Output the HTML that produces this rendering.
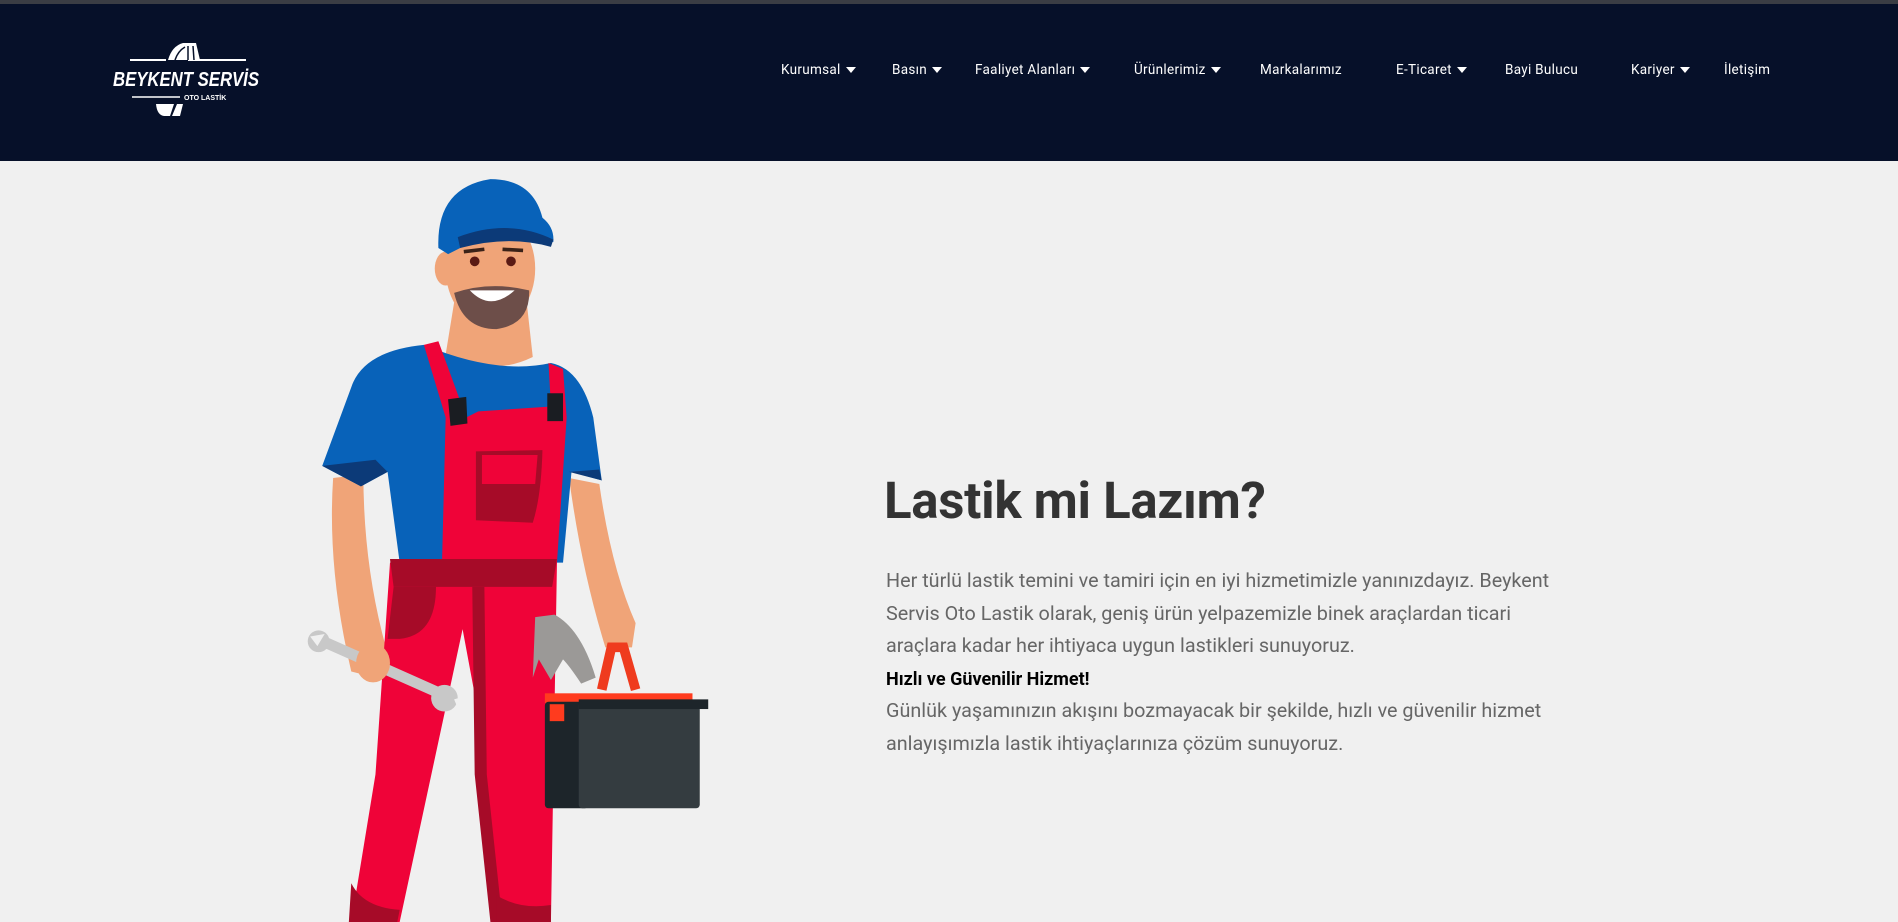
<!DOCTYPE html>
<html><head><meta charset="utf-8"><style>
*{margin:0;padding:0;box-sizing:border-box}
body{width:1898px;height:922px;overflow:hidden;background:#f0f0f0;font-family:"Roboto","Liberation Sans",sans-serif;position:relative}
.top{position:absolute;left:0;top:0;width:1898px;height:4px;background:#3a3d44}
header{position:absolute;left:0;top:4px;width:1898px;height:157px;background:#061029}
nav a{position:absolute;top:58px;color:#fff;font-size:13.5px;letter-spacing:.3px;text-decoration:none;white-space:nowrap}
nav a .c{display:inline-block;margin-left:5px;width:0;height:0;border-left:5px solid transparent;border-right:5px solid transparent;border-top:6px solid #fff;vertical-align:1px}
h1{position:absolute;left:884px;top:472px;font-size:51px;font-weight:bold;color:#333;letter-spacing:-.3px}
.p{position:absolute;left:886px;top:565px;width:694px;font-size:19.8px;line-height:32.5px;color:#666}
.p b{color:#000;font-size:18px;line-height:28px}
</style></head><body>
<div class="top"></div>
<header>
<svg style="position:absolute;left:108px;top:36px" width="160" height="80" viewBox="0 0 160 80">
<path d="M22 20 H58 M80 20 H138" stroke="#fff" stroke-width="2"/>
<path d="M60 20 Q64 6 75 3 L88 3 L92 20 Z" fill="#fff"/>
<path d="M67 20 Q70 11 77 7 M80 6 L80 20 M85 6 L86 20" stroke="#061029" stroke-width="1.5" fill="none"/>
<text x="5" y="46" fill="#fff" font-family="Liberation Sans" font-weight="bold" font-style="italic" font-size="20" textLength="146" lengthAdjust="spacingAndGlyphs">BEYKENT SERVİS</text>
<path d="M24 57 H72" stroke="#fff" stroke-width="1.5"/>
<text x="76" y="60" fill="#fff" font-family="Liberation Sans" font-weight="bold" font-size="7">OTO LASTİK</text>
<path d="M48 64 Q49 75 56 76 L62 76 L66 64 Z M69 64 L75 64 L72 76 L64 76 Z" fill="#fff"/>
</svg>
<nav>
<a style="left:781px">Kurumsal<span class="c"></span></a>
<a style="left:892px">Basın<span class="c"></span></a>
<a style="left:975px">Faaliyet Alanları<span class="c"></span></a>
<a style="left:1134px">Ürünlerimiz<span class="c"></span></a>
<a style="left:1260px">Markalarımız</a>
<a style="left:1396px">E-Ticaret<span class="c"></span></a>
<a style="left:1505px">Bayi Bulucu</a>
<a style="left:1631px">Kariyer<span class="c"></span></a>
<a style="left:1724px">İletişim</a>
</nav>
</header>
<svg style="position:absolute;left:0;top:0" width="1898" height="922" viewBox="0 0 1568 762">
<path d="M275 395 L300 392 Q300 470 320 540 L310 560 L290 555 Q270 470 275 395 Z" fill="#f0a478"/>
<path d="M470 395 L495 400 Q505 470 525 515 L522 535 L500 535 Q480 470 470 395 Z" fill="#f0a478"/>
<path d="M375 250 L435 250 L440 295 Q405 312 368 293 Z" fill="#f0a478"/>
<path d="M350 285 Q300 290 290 320 L266 385 L298 402 L320 390 L330 465 L465 465 L472 390 L497 397 L490 345 Q480 305 455 300 Q410 310 350 285 Z" fill="#0862b9"/>
<path d="M266 385 L298 402 L320 390 L310 380 Z M470 390 L497 397 L495 388 Z" fill="#0c3a78"/>
<path d="M350 285 L362 282 L385 345 L395 340 L455 336 L453 300 L465 305 L468 345 L460 465 L455 762 L410 762 L395 590 L382 520 L330 762 L290 762 L310 640 L322 465 L365 465 L368 345 Z" fill="#ef0338"/>
<path d="M322 462 L460 462 L456 485 L325 485 Z" fill="#a60b28"/>
<path d="M325 485 L360 485 Q360 525 330 528 L320 528 Z" fill="#a60b28"/>
<path d="M390 485 L400 485 L402 640 L415 762 L405 762 L392 640 Z" fill="#a60b28"/>
<path d="M393 373 L448 372 Q447 410 440 432 L393 430 Z" fill="#a60b28"/>
<path d="M398 376 L444 376 L442 400 L398 400 Z" fill="#ef0338"/>
<path d="M370 330 L385 328 L386 350 L372 352 Z M452 325 L465 325 L465 348 L452 348 Z" fill="#1a1d22"/>
<path d="M290 730 Q300 750 330 752 L328 762 L288 762 Z M410 740 Q430 752 455 748 L455 762 L410 762 Z" fill="#a60b28"/>
<ellipse cx="405" cy="222" rx="37" ry="48" fill="#f0a478"/>
<ellipse cx="368" cy="222" rx="9" ry="14" fill="#f0a478"/>
<path d="M375 242 Q405 232 437 240 Q438 268 410 272 Q382 272 375 242 Z" fill="#6d4e49"/>
<path d="M388 240 Q405 258 425 240 Z" fill="#fff"/>
<path d="M362 205 Q360 155 405 148 Q440 148 448 180 Q458 188 457 200 L440 198 Q420 190 380 205 L370 210 Z" fill="#0862b9"/>
<path d="M378 196 Q420 180 457 198 L455 204 Q420 194 380 205 Z" fill="#0c3a78"/>
<circle cx="392" cy="216" r="4" fill="#5a1a14"/><circle cx="422" cy="216" r="4" fill="#5a1a14"/>
<path d="M383 208 L400 206 M415 206 L432 207" stroke="#3b2218" stroke-width="3"/>
<path d="M262 528 L370 576" stroke="#c8c8c8" stroke-width="9" stroke-linecap="round"/>
<circle cx="263" cy="530" r="9" fill="#c8c8c8"/><circle cx="367" cy="577" r="11" fill="#c8c8c8"/>
<path d="M256 526 L268 524 L262 534 Z M375 578 L385 575 L380 590 Z" fill="#f0f0f0"/>
<ellipse cx="308" cy="548" rx="14" ry="16" fill="#f0a478"/>
<path d="M497 570 L505 535 L515 535 L525 570" stroke="#ef3b1e" stroke-width="8" fill="none"/>
<rect x="450" y="573" width="122" height="8" fill="#ff3b1e"/>
<rect x="450" y="580" width="36" height="88" rx="3" fill="#1d252a"/>
<rect x="478" y="580" width="100" height="88" rx="3" fill="#343c40"/>
<rect x="478" y="578" width="107" height="8" fill="#1d252a"/>
<rect x="454" y="582" width="12" height="14" fill="#ff3b1e"/>
<path d="M442 510 L458 508 Q480 520 492 560 L480 565 Q470 550 465 545 L455 562 L445 545 L440 560 Z" fill="#9b9997"/>
</svg>
<h1>Lastik mi Lazım?</h1>
<div class="p">Her türlü lastik temini ve tamiri için en iyi hizmetimizle yanınızdayız. Beykent Servis Oto Lastik olarak, geniş ürün yelpazemizle binek araçlardan ticari araçlara kadar her ihtiyaca uygun lastikleri sunuyoruz.<br><b>Hızlı ve Güvenilir Hizmet!</b><br>Günlük yaşamınızın akışını bozmayacak bir şekilde, hızlı ve güvenilir hizmet anlayışımızla lastik ihtiyaçlarınıza çözüm sunuyoruz.</div>
</body></html>
